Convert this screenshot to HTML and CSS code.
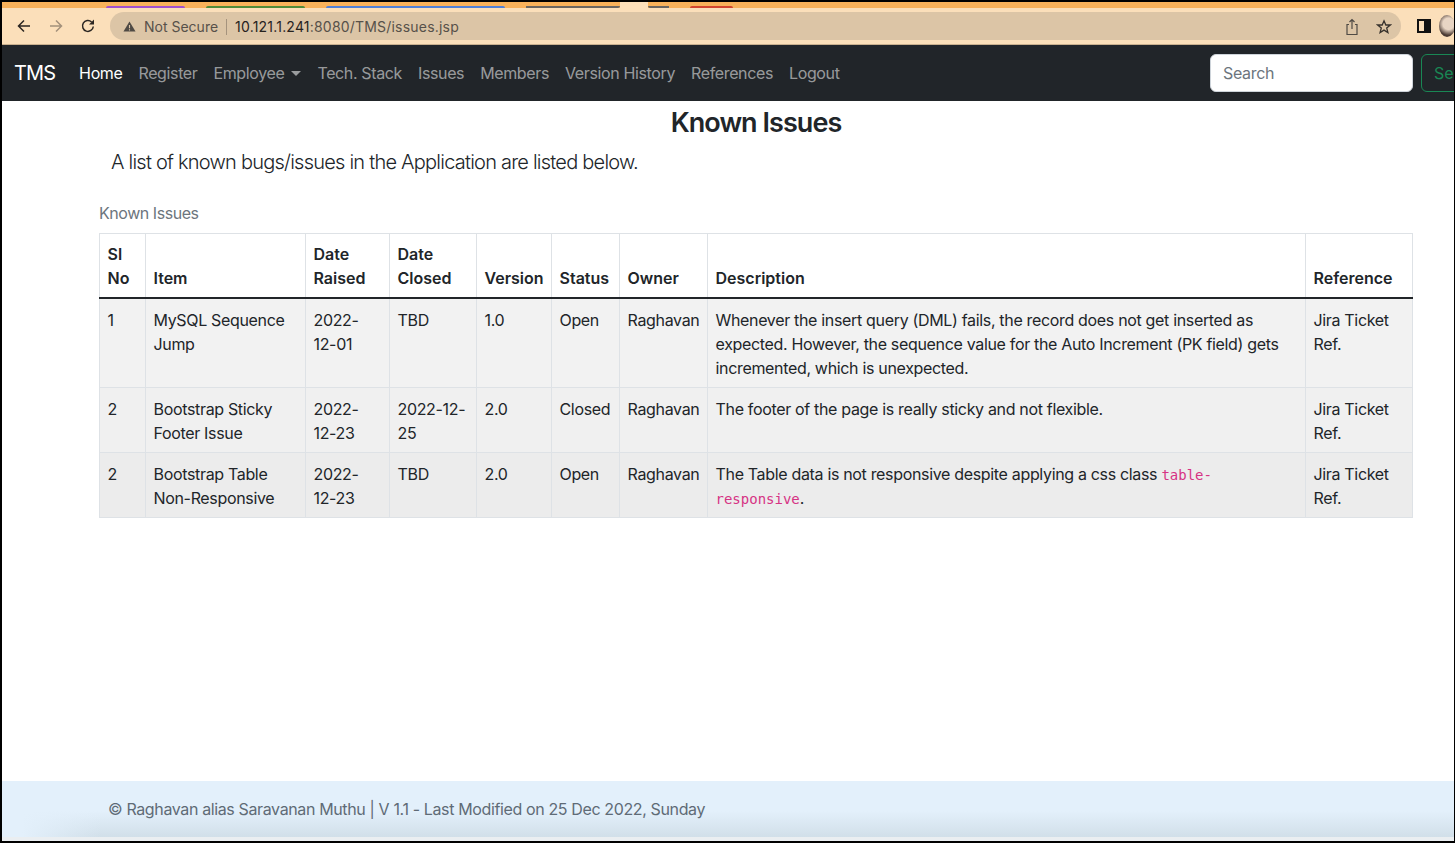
FILE: index.html
```html
<!DOCTYPE html>
<html lang="en">
<head>
<meta charset="UTF-8">
<title>Known Issues</title>
<link rel="stylesheet" href="styles.css">
</head>
<body>
<div class="frame">
    <div class="tabstrip">
        <span class="tabmark purple"></span>
        <span class="tabmark green"></span>
        <span class="tabmark blue"></span>
        <span class="tabmark gray left"></span>
        <span class="tabmark active"></span>
        <span class="tabmark gray right"></span>
        <span class="tabmark red"></span>
    </div>
    <div class="toolbar">
        <svg class="tool" viewBox="0 0 16 16"><path d="M14 8H2.500M8 2.500 2.500 8 8 13.500" fill="none" stroke="#2b2622" stroke-width="1.500"/></svg>
        <svg class="tool" viewBox="0 0 16 16"><path d="M2 8h11.500M8 2.500 13.500 8 8 13.500" fill="none" stroke="#a3917b" stroke-width="1.500"/></svg>
        <svg class="tool" viewBox="0 0 16 16"><path d="M13.300 8.500A5.400 5.400 0 1 1 11.600 4" fill="none" stroke="#2b2622" stroke-width="1.500"/><path d="M14 1.500V6.500H9z" fill="#2b2622"/></svg>
        <div class="omnibox">
            <svg class="warn" viewBox="0 0 14 14"><path d="M7 1.500 13.500 12.500H.5z" fill="#4f4a44"/><path d="M7 5.500v3.500M7 10v1.200" stroke="#dcc5a6" stroke-width="1.200"/></svg>
            <span class="insecure">Not Secure</span>
            <span class="sep"></span>
            <span class="url"><b>10.121.1.241</b>:8080/TMS/issues.jsp</span>
            <svg class="omni-icon share" viewBox="0 0 16 18"><path d="M5 6.500H3V16.500H13V6.500H11M8 11V1.500M5.500 4 8 1.500 10.500 4" fill="none" stroke="#4f4a44" stroke-width="1.200"/></svg>
            <svg class="omni-icon" viewBox="0 0 16 16"><path d="M8 1.800 9.800 6h4.500l-3.600 3 1.200 4.600L8 11.100l-3.900 2.500L5.300 9 1.700 6h4.500z" fill="none" stroke="#37322d" stroke-width="1.300"/></svg>
        </div>
        <span class="panel-icon"></span>
        <span class="avatar"></span>
    </div>

    <nav class="navbar">
        <a class="brand" href="#">TMS</a>
        <ul class="nav-links">
            <li><a class="current" href="#">Home</a></li>
            <li><a href="#">Register</a></li>
            <li><a class="dropdown" href="#">Employee</a></li>
            <li><a href="#">Tech. Stack</a></li>
            <li><a href="#">Issues</a></li>
            <li><a href="#">Members</a></li>
            <li><a href="#">Version History</a></li>
            <li><a href="#">References</a></li>
            <li><a href="#">Logout</a></li>
        </ul>
        <form class="search">
            <input type="search" placeholder="Search">
            <button type="button">Search</button>
        </form>
    </nav>

    <main class="content">
        <h3>Known Issues</h3>
        <p class="lead">A list of known bugs/issues in the Application are listed below.</p>
        <table>
            <caption>Known Issues</caption>
            <colgroup>
                <col class="c-no"><col class="c-item"><col class="c-raised"><col class="c-closed"><col class="c-version">
                <col class="c-status"><col class="c-owner"><col class="c-desc"><col class="c-ref">
            </colgroup>
            <thead>
                <tr>
                    <th>Sl No</th>
                    <th>Item</th>
                    <th>Date Raised</th>
                    <th>Date Closed</th>
                    <th>Version</th>
                    <th>Status</th>
                    <th>Owner</th>
                    <th>Description</th>
                    <th>Reference</th>
                </tr>
            </thead>
            <tbody>
                <tr>
                    <td>1</td>
                    <td>MySQL Sequence Jump</td>
                    <td>2022-12-01</td>
                    <td>TBD</td>
                    <td>1.0</td>
                    <td>Open</td>
                    <td>Raghavan</td>
                    <td>Whenever the insert query (DML) fails, the record does not get inserted as expected. However, the sequence value for the Auto Increment (PK field) gets incremented, which is unexpected.</td>
                    <td>Jira Ticket Ref.</td>
                </tr>
                <tr>
                    <td>2</td>
                    <td>Bootstrap Sticky Footer Issue</td>
                    <td>2022-12-23</td>
                    <td>2022-12-25</td>
                    <td>2.0</td>
                    <td>Closed</td>
                    <td>Raghavan</td>
                    <td>The footer of the page is really sticky and not flexible.</td>
                    <td>Jira Ticket Ref.</td>
                </tr>
                <tr>
                    <td>2</td>
                    <td>Bootstrap Table Non-Responsive</td>
                    <td>2022-12-23</td>
                    <td>TBD</td>
                    <td>2.0</td>
                    <td>Open</td>
                    <td>Raghavan</td>
                    <td>The Table data is not responsive despite applying a css class <code>table-responsive</code>.</td>
                    <td>Jira Ticket Ref.</td>
                </tr>
            </tbody>
        </table>
    </main>

    <footer class="footer">© Raghavan alias Saravanan Muthu | V 1.1 - Last Modified on 25 Dec 2022, Sunday</footer>
</div>
</body>
</html>
```
FILE: styles.css
```css
* {
    margin: 0;
    padding: 0;
    box-sizing: border-box;
}
html, body {
    height: 100%;
    overflow: hidden;
}
body {
    font-family: 'Inter', 'Liberation Sans', sans-serif;
    font-size: 16px;
    line-height: 24px;
    letter-spacing: -0.33px;
    color: #212529;
    background-color: #000;
}
.frame {
    height: 841px;
    margin: 0 1px 0 2px;
    display: flex;
    flex-direction: column;
    overflow: hidden;
    background-color: #fff;
}

/* browser chrome */
.tabstrip {
    height: 8px;
    flex: none;
    display: flex;
    align-items: flex-end;
    background: linear-gradient(#000 2px, #f8b15a 2px);
    padding-left: 104px;
}
.tabmark {
    height: 2px;
    margin-right: 21px;
    border-radius: 2px 2px 0 0;
}
.purple { width: 79px; background-color: #a04fd0; }
.green { width: 99px; background-color: #4f8a3a; }
.blue { width: 179px; background-color: #4f7fd8; }
.tabmark.gray { background-color: #6a6560; }
.gray.left { width: 94px; margin-right: 0; border-radius: 0 0 6px 0; }
.gray.right { width: 21px; border-radius: 0 0 0 6px; }
.tabmark.active {
    width: 28px;
    height: 6px;
    margin-right: 0;
    background-color: #fbdfba;
    border-radius: 0;
}
.red { width: 43px; background-color: #d2452f; }

.toolbar {
    height: 37px;
    flex: none;
    display: flex;
    align-items: center;
    padding-left: 14px;
    background-color: #fbdfba;
    border-bottom: 1px solid #c9b08e;
}
.tool {
    width: 16px;
    height: 16px;
    margin-right: 16px;
    flex: none;
}
.omnibox {
    width: 1291px;
    height: 28px;
    margin-left: -2px;
    flex: none;
    display: flex;
    align-items: center;
    padding: 1px 9px 0 13px;
    border-radius: 14px;
    background-color: #dcc5a6;
    font-size: 14px;
    letter-spacing: 0;
    color: #57514a;
}
.warn {
    width: 13px;
    height: 13px;
    margin-right: 8px;
}
.sep {
    width: 1px;
    height: 16px;
    margin: 0 8px;
    background-color: #a5937d;
}
.url {
    letter-spacing: 0.2px;
}
.url b {
    font-weight: 400;
    color: #26221e;
}
.omni-icon {
    width: 16px;
    height: 16px;
    flex: none;
}
.share {
    margin-left: auto;
    margin-right: 16px;
    height: 18px;
}
.panel-icon {
    width: 14px;
    height: 14px;
    margin-left: 16px;
    flex: none;
    border: 2px solid #111;
    background: linear-gradient(90deg, #fbdfba 50%, #111 50%);
}
.avatar {
    width: 16px;
    height: 22px;
    margin-left: 8px;
    flex: none;
    border-radius: 50%;
    background: radial-gradient(circle at 60% 40%, #e8d5c4 35%, #4a3a33 70%);
}

/* navbar */
.navbar {
    height: 56px;
    flex: none;
    display: flex;
    align-items: center;
    padding-left: 12px;
    background-color: #212529;
}
.brand {
    margin-right: 16px;
    font-size: 20px;
    letter-spacing: -0.9px;
    color: #fff;
    text-decoration: none;
}
.nav-links {
    display: flex;
    list-style: none;
}
.nav-links a {
    display: block;
    padding: 8px;
    letter-spacing: -0.37px;
    color: rgba(255, 255, 255, 0.55);
    text-decoration: none;
}
.nav-links a.current {
    color: #fff;
}
.dropdown::after {
    content: "";
    display: inline-block;
    margin-left: 7px;
    vertical-align: 3px;
    border-top: 5px solid;
    border-left: 5px solid transparent;
    border-right: 5px solid transparent;
}
.search {
    display: flex;
    margin-left: auto;
    flex: none;
    width: 244px;
    overflow: hidden;
    gap: 8px;
}
.search input {
    width: 203px;
    height: 38px;
    flex: none;
    padding: 6px 12px;
    border: 1px solid #ced4da;
    border-radius: 6px;
    font: inherit;
    letter-spacing: -0.33px;
    background-color: #fff;
}
.search input::placeholder {
    color: #6c757d;
}
.search button {
    width: 80px;
    height: 38px;
    flex: none;
    padding: 6px 12px;
    text-align: left;
    border: 1px solid #198754;
    border-radius: 6px;
    font: inherit;
    color: #198754;
    background: none;
}

/* content */
.content {
    flex: 1;
    padding: 0 41px 0 97px;
}
h3 {
    margin-top: 5px;
    text-align: center;
    font-size: 27px;
    line-height: 34px;
    font-weight: 600;
    letter-spacing: -0.95px;
}
.lead {
    margin: 7px 0 0 12px;
    font-size: 20px;
    line-height: 30px;
    font-weight: 300;
    letter-spacing: -0.77px;
}
table {
    width: 1313px;
    table-layout: fixed;
    border-collapse: collapse;
    caption-side: top;
}
caption {
    padding: 8px 0;
    margin-top: 16px;
    text-align: left;
    letter-spacing: -0.45px;
    color: #6c757d;
}
.c-no { width: 46px; }
.c-item { width: 160px; }
.c-raised { width: 84px; }
.c-closed { width: 87px; }
.c-version { width: 75px; }
.c-status { width: 68px; }
.c-owner { width: 88px; }
.c-desc { width: 598px; }
.c-ref { width: 107px; }
th, td {
    padding: 9px 8px 7px 7.5px;
    border: 1px solid #dee2e6;
    text-align: left;
    vertical-align: top;
}
th {
    padding: 8px 8px 7px 7.5px;
    vertical-align: bottom;
    font-weight: 600;
    letter-spacing: 0;
    border-bottom: 2px solid #212529;
}
tbody td {
    background-color: #f2f2f2;
}
tbody tr:last-child td {
    background-color: #ececec;
}
tbody tr:nth-child(2) td {
    background-color: #f0f0f0;
}
code {
    font-family: 'DejaVu Sans Mono', 'Liberation Mono', monospace;
    font-size: 14px;
    line-height: 1;
    letter-spacing: 0;
    color: #d63384;
}

/* footer */
.footer {
    height: 60px;
    flex: none;
    padding: 16px 0 0 106px;
    letter-spacing: -0.37px;
    color: #5f6b76;
    background:
        linear-gradient(90deg, #e3f0fb 20px, rgba(227, 240, 251, 0) 100px) 0 0 / 100% 56px no-repeat,
        linear-gradient(#e3f0fb 0, #e3f0fb 30px, #d1dfe9 56px, #eaeef1 56px);
}
```
